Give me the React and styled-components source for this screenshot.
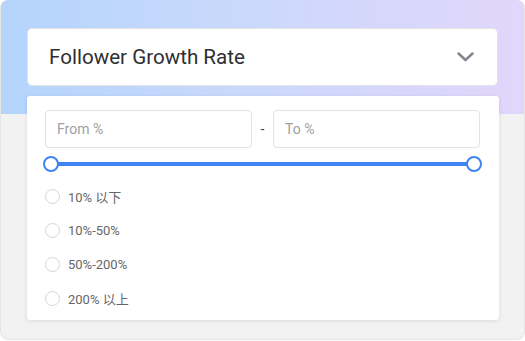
import React from "react";
import styled, { createGlobalStyle } from "styled-components";

const Global = createGlobalStyle`
  html, body { margin: 0; padding: 0; background: #ffffff; }
  body { font-family: Roboto, "Noto Sans CJK SC", sans-serif; }
  * { box-sizing: border-box; }
`;

const Card = styled.div`
  width: 525px;
  height: 340px;
  border-radius: 8px;
  border: 1px solid #e6e6e6;
  border-top: none;
  overflow: hidden;
  background:
    linear-gradient(to bottom, rgba(0,0,0,0) 0 114px, #f2f2f2 114px),
    linear-gradient(90deg, #b4d4fc 0%, #c9d9fb 45%, #e2d6fb 100%);
  padding: 28px 26px 0 26px;
  display: flex;
  flex-direction: column;
  gap: 10px;
`;

const Header = styled.div`
  height: 58px;
  background: #fff;
  border: 1px solid #e4e4e8;
  border-radius: 5px;
  display: flex;
  align-items: center;
  justify-content: space-between;
  padding: 0 23px 0 21px;
`;

const Title = styled.div`
  font-size: 20.6px;
  color: #2e2e33;
`;

const Panel = styled.div`
  background: #fff;
  border-radius: 3px;
  box-shadow: 0 1px 4px rgba(0,0,0,0.10);
  padding: 14px 19px 5px 18px;
  display: flex;
  flex-direction: column;
  margin-right: -1px;
`;

const InputsRow = styled.div`
  display: flex;
  align-items: center;
`;

const Input = styled.div`
  flex: 1;
  height: 38px;
  border: 1px solid #e3e3e3;
  border-radius: 4px;
  display: flex;
  align-items: center;
  padding: 0 11px;
  font-size: 14px;
  color: #a0a0a0;
`;

const Dash = styled.div`
  width: 21px;
  text-align: center;
  font-size: 14px;
  color: #444;
`;

const Slider = styled.div`
  position: relative;
  height: 16px;
  margin: 8px -2px 0 -2px;
  display: flex;
  align-items: center;
`;

const Track = styled.div`
  flex: 1;
  margin: 0 8px;
  height: 4px;
  background: #3f84f2;
  border-radius: 2px;
`;

const Handle = styled.div`
  position: absolute;
  top: 0;
  ${(p) => (p.$right ? "right: 0;" : "left: 0;")}
  width: 16px;
  height: 16px;
  border-radius: 50%;
  background: #fff;
  border: 2px solid #3f84f2;
`;

const Options = styled.div`
  display: flex;
  flex-direction: column;
  margin-top: 7px;
`;

const Option = styled.label`
  display: flex;
  align-items: center;
  height: 34px;
  gap: 8px;
  font-size: 13px;
  color: #666666;
`;

const Radio = styled.span`
  width: 15px;
  height: 15px;
  border-radius: 50%;
  border: 1px solid #d6d6d6;
  background: #fff;
  flex: none;
`;

const Chevron = () => (
  <svg width="17" height="10" viewBox="0 0 17 10">
    <polyline points="1.5,1.5 8.5,8 15.5,1.5" fill="none" stroke="#85858f" strokeWidth="2.5" strokeLinecap="round" strokeLinejoin="round" />
  </svg>
);

const options = ["10% 以下", "10%-50%", "50%-200%", "200% 以上"];

export default function App() {
  return (
    <>
      <Global />
      <Card>
        <Header>
          <Title>Follower Growth Rate</Title>
          <Chevron />
        </Header>
        <Panel>
          <InputsRow>
            <Input>From %</Input>
            <Dash>-</Dash>
            <Input>To %</Input>
          </InputsRow>
          <Slider>
            <Handle />
            <Track />
            <Handle $right />
          </Slider>
          <Options>
            {options.map((o) => (
              <Option key={o}>
                <Radio />
                {o}
              </Option>
            ))}
          </Options>
        </Panel>
      </Card>
    </>
  );
}
